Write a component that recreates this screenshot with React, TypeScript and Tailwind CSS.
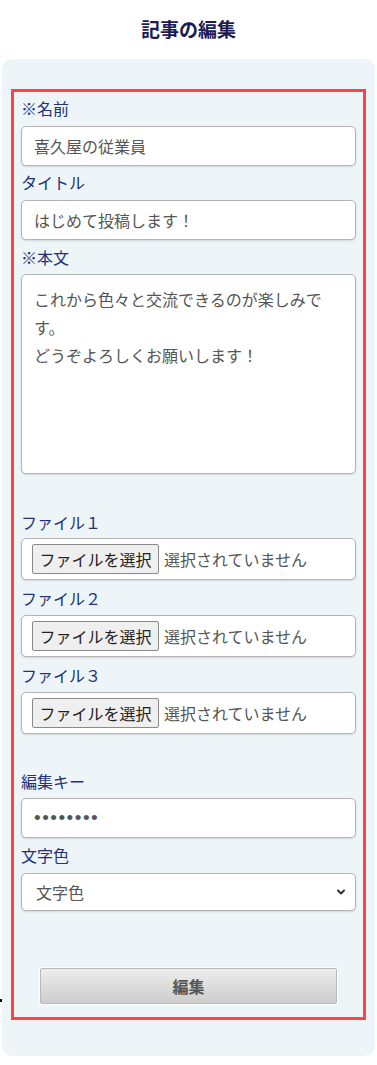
import { ChevronDown } from "lucide-react";

const jp = "font-['Noto_Sans_CJK_JP','Noto_Sans',sans-serif]";

const boxCls =
  "block w-full rounded-[5px] border border-[#b4b4b4] bg-white text-[16px] text-[#555] shadow-[0_1px_2px_rgba(0,0,0,0.12)] outline-none";

function Label({ text, className = "" }: { text: string; className?: string }) {
  return (
    <div className={`h-6 text-[16px] leading-6 text-[#23307a] ${className}`}>
      {text}
    </div>
  );
}

function FileField() {
  return (
    <div className={`${boxCls} flex h-[42px] items-center gap-[5px] pl-[10px]`}>
      <span className="flex h-[30px] w-[127px] items-center justify-center rounded-[2px] border border-[#8a8a8a] bg-[#efefef] text-[16px] text-[#222]">
        ファイルを選択
      </span>
      <span className="text-[16px] text-[#555]">選択されていません</span>
    </div>
  );
}

export default function App() {
  return (
    <div className={`relative min-h-[1065px] bg-white ${jp}`}>
      {/* page title */}
      <h1 className="flex h-[59px] items-center justify-center text-[19px] font-bold text-[#1b1c56]">
        記事の編集
      </h1>

      {/* stray dot at left edge */}
      <span className="absolute left-0 top-[999px] h-[3px] w-[2px] bg-black" />

      <div className="mx-[2px] rounded-[10px] bg-[#edf5f9] px-[9px] pb-[36px] pt-[30px]">
        <form className="border-[3px] border-[#ff4242] px-[7px] pb-[13px] pt-[4px]">
          <Label text="※名前" />
          <input
            className={`${boxCls} mt-[6px] h-10 px-3`}
            defaultValue="喜久屋の従業員"
          />

          <Label text="タイトル" className="mt-[4px]" />
          <input
            className={`${boxCls} mt-[6px] h-10 px-3`}
            defaultValue="はじめて投稿します！"
          />

          <Label text="※本文" className="mt-[5px]" />
          <textarea
            className={`${boxCls} mt-[5px] h-[200px] resize-none pl-3 pr-5 pt-[10px] leading-7`}
            defaultValue={"これから色々と交流できるのが楽しみです。\nどうぞよろしくお願いします！"}
          />

          <Label text="ファイル１" className="mt-[36px]" />
          <div className="mt-[4px]">
            <FileField />
          </div>

          <Label text="ファイル２" className="mt-[6px]" />
          <div className="mt-[5px]">
            <FileField />
          </div>

          <Label text="ファイル３" className="mt-[6px]" />
          <div className="mt-[5px]">
            <FileField />
          </div>

          <Label text="編集キー" className="mt-[35px]" />
          <input
            type="password"
            className={`${boxCls} mt-[5px] h-10 px-3 font-['Liberation_Sans',sans-serif] text-[19px] tracking-[1.5px] text-[#333]`}
            defaultValue="12345678"
          />

          <Label text="文字色" className="mt-[5px]" />
          <div className="relative mt-[6px]">
            <select className={`${boxCls} h-[38px] appearance-none pl-[14px]`}>
              <option>文字色</option>
            </select>
            <ChevronDown
              className="pointer-events-none absolute right-[9px] top-[13px] h-[12px] w-[12px] text-[#333]"
              strokeWidth={4}
            />
          </div>

          <div className="mt-[57px] flex justify-center">
            <button
              type="button"
              className="h-9 w-[297px] rounded-[2px] border border-[#b9b9b9] bg-gradient-to-b from-[#ededed] to-[#cdcdcd] text-[16px] font-semibold text-[#555] shadow-[0_0_0_1px_#ffffff]"
            >
              編集
            </button>
          </div>
        </form>
      </div>
    </div>
  );
}
